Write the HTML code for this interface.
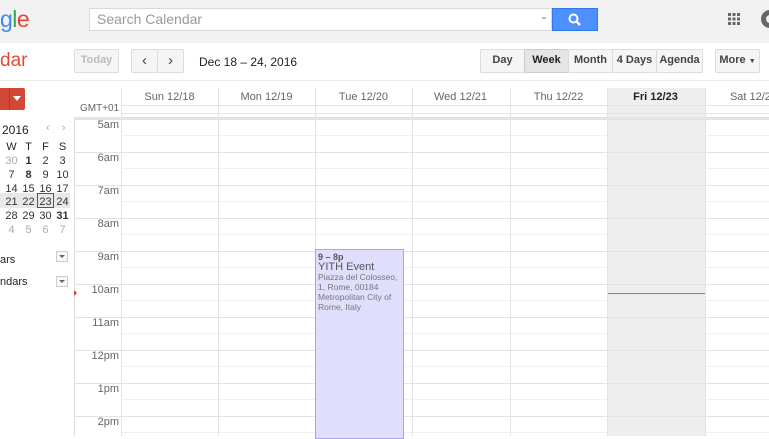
<!DOCTYPE html>
<html><head><meta charset="utf-8">
<style>
*{margin:0;padding:0;box-sizing:border-box}
body{width:769px;height:436px;overflow:hidden;background:#fff;font-family:"Liberation Sans",Arial,sans-serif;position:relative;color:#222}
.a{position:absolute}
.btn{position:absolute;height:23px;border:1px solid #dcdcdc;background:#f5f5f5;font-size:11px;font-weight:bold;color:#444;text-align:center;line-height:21px;border-radius:2px}
.hl{position:absolute;left:74px;right:0;height:1px;background:#e3e3e3}
.hh{position:absolute;left:121px;right:0;height:1px;background:#f0f0f0}
.vl{position:absolute;width:1px;background:#e3e3e3}
.tl{position:absolute;left:74px;width:45px;text-align:right;font-size:11px;color:#666}
.dh{position:absolute;top:91px;width:97px;text-align:center;font-size:11px;color:#666}
.mc{position:absolute;font-size:11px;color:#333;width:17px;text-align:center}
</style></head><body>
<div class="a" style="left:0;top:0;width:769px;height:43px;background:#f1f1f1"></div>
<div class="a" style="left:0;top:6px;font-size:23px;letter-spacing:-0.5px"><span style="color:#4285f4">g</span><span style="color:#34a853">l</span><span style="color:#ea4335">e</span></div>
<div class="a" style="left:89px;top:8px;width:463px;height:23px;background:#fff;border:1px solid #d9d9d9"></div>
<div class="a" style="left:97px;top:11px;font-size:14px;color:#999">Search Calendar</div>
<div class="a" style="left:541px;top:17px;width:0;height:0;border-left:3px solid transparent;border-right:3px solid transparent;border-top:3px solid #bbb"></div>
<div class="a" style="left:552px;top:8px;width:46px;height:23px;background:#4d90fe;border:1px solid #3079ed"></div>
<svg class="a" style="left:567px;top:12px" width="16" height="16" viewBox="0 0 16 16"><circle cx="6.5" cy="6.5" r="4" fill="none" stroke="#fff" stroke-width="2"/><path d="M9.5 9.5L13 13" stroke="#fff" stroke-width="2.4"/></svg>
<svg class="a" style="left:728px;top:13px" width="12" height="12"><g fill="#666"><rect x="0" y="0" width="3" height="3"/><rect x="4.5" y="0" width="3" height="3"/><rect x="9" y="0" width="3" height="3"/><rect x="0" y="4.5" width="3" height="3"/><rect x="4.5" y="4.5" width="3" height="3"/><rect x="9" y="4.5" width="3" height="3"/><rect x="0" y="9" width="3" height="3"/><rect x="4.5" y="9" width="3" height="3"/><rect x="9" y="9" width="3" height="3"/></g></svg>
<div class="a" style="left:761px;top:10px;width:18px;height:18px;border-radius:50%;border:5px solid #666"></div>

<div class="a" style="left:0;top:50px;font-size:19px;color:#dd4b39">dar</div>
<div class="btn" style="left:74px;top:49px;width:45px;color:#bbb;height:24px">Today</div>
<div class="btn" style="left:131px;top:49px;width:27px;height:24px;font-size:15px;font-weight:normal">&#x2039;</div>
<div class="btn" style="left:157px;top:49px;width:27px;height:24px;font-size:15px;font-weight:normal">&#x203A;</div>
<div class="a" style="left:199px;top:55px;font-size:12px;color:#222">Dec 18 – 24, 2016</div>
<div class="btn" style="left:480px;top:49px;width:45px;height:24px">Day</div>
<div class="btn" style="left:524px;top:49px;width:45px;height:24px;background:#e5e5e5;border-color:#ccc;color:#222">Week</div>
<div class="btn" style="left:568px;top:49px;width:45px;height:24px">Month</div>
<div class="btn" style="left:612px;top:49px;width:45px;height:24px">4 Days</div>
<div class="btn" style="left:656px;top:49px;width:47px;height:24px">Agenda</div>
<div class="btn" style="left:715px;top:49px;width:45px;height:24px">More <span style="font-size:7px">&#9660;</span></div>
<div class="a" style="left:0;top:80px;width:769px;height:1px;background:#ececec"></div>

<div class="a" style="left:0;top:88px;width:25px;height:22px;background:#d14836;border-radius:0 2px 2px 0"></div>
<div class="a" style="left:9px;top:88px;width:1px;height:22px;background:#b03a2a"></div>
<div class="a" style="left:13px;top:96px;border-left:4px solid transparent;border-right:4px solid transparent;border-top:5px solid #fff"></div>

<div class="a" style="left:2px;top:123px;font-size:12px;color:#222">2016</div>
<div class="a" style="left:46px;top:122px;font-size:11px;color:#aaa">&#x2039;&nbsp;&nbsp;&nbsp;&nbsp;&#x203A;</div>
<div class="a" style="left:0;top:193px;width:70px;height:15px;background:#e8e8e8"></div>
<div class="a" style="left:37px;top:193px;width:17px;height:15px;border:1px solid #555"></div>
<div id="mini"></div>
<div class="a" style="left:0;top:254px;font-size:11px">ars</div>
<div class="a" style="left:0;top:276px;font-size:11px">ndars</div>
<div class="a" style="left:56px;top:251px;width:12px;height:11px;border:1px solid #ccc;background:#f8f8f8"></div>
<div class="a" style="left:59px;top:255px;border-left:3px solid transparent;border-right:3px solid transparent;border-top:3px solid #666"></div>
<div class="a" style="left:56px;top:276px;width:12px;height:11px;border:1px solid #ccc;background:#f8f8f8"></div>
<div class="a" style="left:59px;top:280px;border-left:3px solid transparent;border-right:3px solid transparent;border-top:3px solid #666"></div>

<div class="a" style="left:607px;top:88px;width:98px;height:348px;background:#eeeeee"></div>
<div class="dh" style="left:121px">Sun 12/18</div>
<div class="dh" style="left:218px">Mon 12/19</div>
<div class="dh" style="left:315px">Tue 12/20</div>
<div class="dh" style="left:412px">Wed 12/21</div>
<div class="dh" style="left:510px">Thu 12/22</div>
<div class="dh" style="left:607px;font-weight:bold;color:#222">Fri 12/23</div>
<div class="dh" style="left:705px">Sat 12/24</div>
<div class="a" style="left:80px;top:103px;font-size:10px;color:#666">GMT+01</div>
<div class="a" style="left:121px;top:105px;right:0;height:1px;background:#e3e3e3"></div>
<div class="a" style="left:121px;top:113px;right:0;height:1px;background:#e3e3e3"></div>
<div class="a" style="left:74px;top:117px;right:0;height:3px;background:#e3e3e3"></div>
<div class="a" style="left:74px;top:119px;width:1px;height:317px;background:#ddd"></div>

<div id="grid"></div>

<div class="a" style="left:74px;top:290px;border-top:3px solid transparent;border-bottom:3px solid transparent;border-left:3px solid #d14836"></div>
<div class="a" style="left:315px;top:249px;width:89px;height:190px;background:#e0defd;border:1px solid #a9a2ef"></div>
<div class="a" style="left:318px;top:252px;font-size:9px;font-weight:bold;color:#555">9 – 8p</div>
<div class="a" style="left:318px;top:261px;font-size:11px;color:#555">YITH Event</div>
<div class="a" style="left:318px;top:272px;width:86px;font-size:8.5px;line-height:10px;color:#777">Piazza del Colosseo, 1, Rome, 00184<br>Metropolitan City of Rome, Italy</div>
<div class="a" style="left:608px;top:293px;width:97px;height:1px;background:#e06050"></div>

<script>
var g='';
var labels=['5am','6am','7am','8am','9am','10am','11am','12pm','1pm','2pm'];
for(var i=0;i<10;i++){var y=119+i*33;
 if(i>0)g+='<div class="hl" style="top:'+y+'px"></div>';
 g+='<div class="hh" style="top:'+(y+16)+'px"></div>';
 g+='<div class="tl" style="top:'+y+'px">'+labels[i]+'</div>';}
var xs=[121,218,315,412,510,607,705];
for(var j=0;j<xs.length;j++){g+='<div class="vl" style="left:'+xs[j]+'px;top:88px;height:348px"></div>';}
document.getElementById('grid').innerHTML=g;
var m='';var cols=[3,20,37,54];
var hdr=['W','T','F','S'];
for(var c=0;c<4;c++)m+='<div class="mc" style="left:'+cols[c]+'px;top:141px;color:#222">'+hdr[c]+'</div>';
var rows=[['30','1','2','3'],['7','8','9','10'],['14','15','16','17'],['21','22','23','24'],['28','29','30','31'],['4','5','6','7']];
for(var r=0;r<6;r++)for(var c=0;c<4;c++){var col='#333',w='normal';
 if(r==0&&c==0)col='#aaa';if(r==5)col='#aaa';
 if((r==0&&c==1)||(r==1&&c==1)||(r==4&&c==3))w='bold';
 m+='<div class="mc" style="left:'+cols[c]+'px;top:'+(155+r*13.8)+'px;color:'+col+';font-weight:'+w+'">'+rows[r][c]+'</div>';}
document.getElementById('mini').innerHTML=m;
</script>
</body></html>
